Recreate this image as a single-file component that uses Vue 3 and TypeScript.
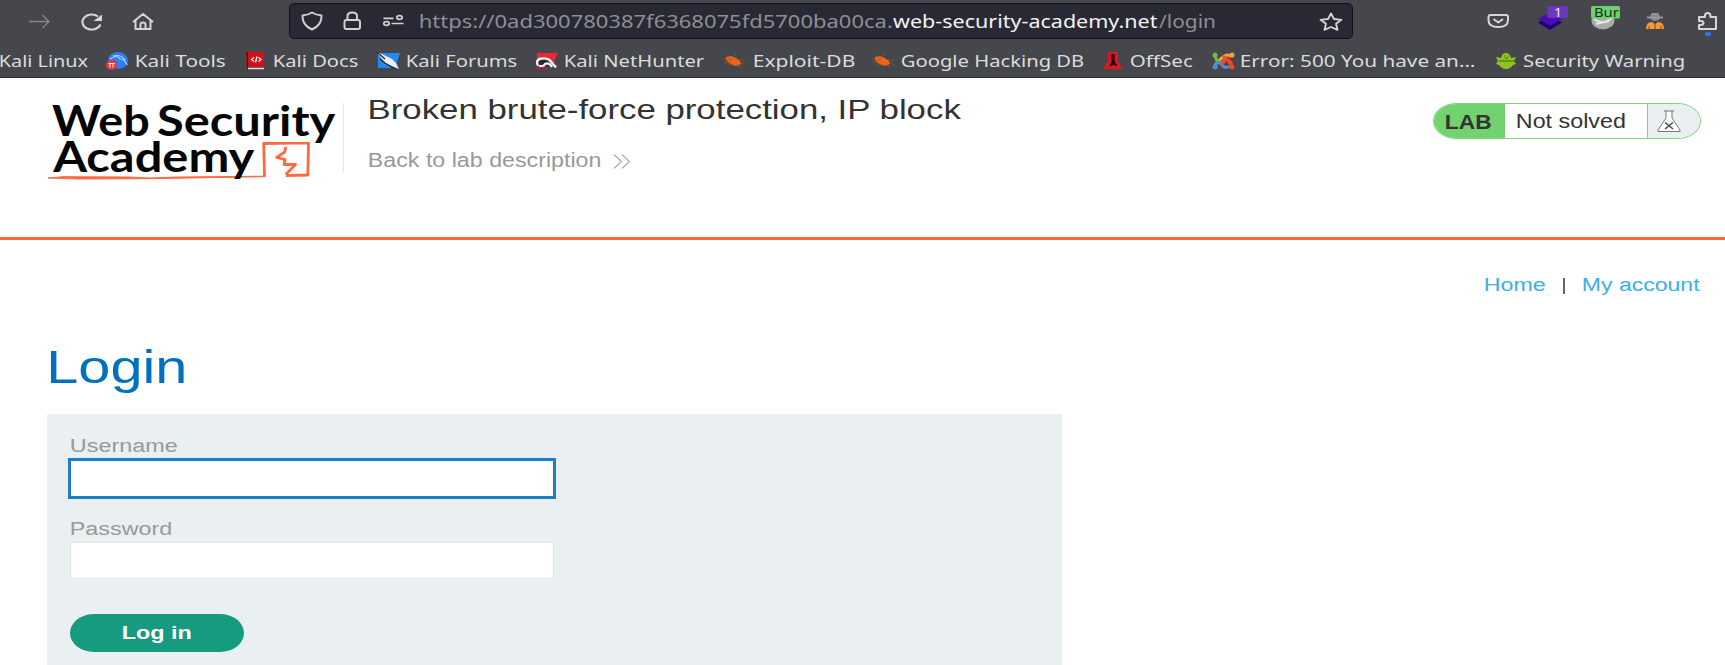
<script setup lang="ts">
import { h, type FunctionalComponent } from 'vue'

interface LabelProps { t: string; w: number; size: number; weight?: number; font?: string }
interface Bookmark { icon: string; label: string; gap: number; width: number; before: number }

const ctx = document.createElement('canvas').getContext('2d')!

/* A single line of text whose visible ink spans exactly `w` pixels. */
const Label: FunctionalComponent<LabelProps> = (p) => {
  const family = p.font ?? '"Liberation Sans", Arial, sans-serif'
  const weight = p.weight ?? 400
  ctx.font = `${weight} ${p.size}px ${family}`
  const m = ctx.measureText(p.t)
  const left = -m.actualBoundingBoxLeft
  const scale = p.w / (m.actualBoundingBoxRight + m.actualBoundingBoxLeft)
  return h('svg', { class: 'label', width: p.w, height: 24 }, [
    h('text', {
      x: left * -1, y: 18, transform: `scale(${scale} 1)`,
      'font-family': family, 'font-size': p.size, 'font-weight': weight, fill: 'currentColor',
    }, p.t),
  ])
}
Label.props = ['t', 'w', 'size', 'weight', 'font']

const ui = '"Noto Sans", sans-serif'
const brand = 'Lato, sans-serif'

const bookmarks: Bookmark[] = [
  { icon: 'tools', before: 17.5, gap: 8, label: 'Kali Tools', width: 90 },
  { icon: 'docs', before: 20, gap: 8, label: 'Kali Docs', width: 84.5 },
  { icon: 'forums', before: 18.5, gap: 7, label: 'Kali Forums', width: 110.5 },
  { icon: 'hunter', before: 17.5, gap: 7.5, label: 'Kali NetHunter', width: 139.5 },
  { icon: 'bug', before: 18, gap: 8.5, label: 'Exploit-DB', width: 100.5 },
  { icon: 'bug', before: 17.5, gap: 7.5, label: 'Google Hacking DB', width: 181.5 },
  { icon: 'offsec', before: 19.5, gap: 8, label: 'OffSec', width: 62 },
  { icon: 'joomla', before: 19, gap: 6.5, label: 'Error: 500 You have an…', width: 233 },
  { icon: 'warn', before: 21.5, gap: 6.5, label: 'Security Warning', width: 161 },
]
</script>

<template>
  <div class="page">
    <header class="chrome">
      <div class="toolbar">
        <svg class="nav-icons" width="289" height="40" fill="none" stroke="#d6d6d6" stroke-width="2">
          <path d="M29 21.5H49M42.500 15l6.500 6.500-6.500 6.500" stroke="#85868a" stroke-width="1.300" />
          <path d="M98 16.500A9.300 7.500 0 1 0 100.500 24.500" />
          <path d="M102 14.500v6.500h-8.500z" fill="#d6d6d6" stroke="none" />
          <path d="M133 22l10-8 10 8M135.500 20.500v8.500h15v-8.500M140.500 29v-4.500q0-2 2.500-2t2.500 2v4.500" stroke-linejoin="round" />
        </svg>
        <div class="urlbar">
          <svg class="url-icons" width="130" height="34" fill="none" stroke="#d0d0d3" stroke-width="2">
            <path d="M22 8.500Q18 11 12.500 11.500 12 21 22 25.500 32 21 31.500 11.500 26 11 22 8.500Z" stroke-linejoin="round" />
            <rect x="54.500" y="16" width="15.500" height="9" rx="2" />
            <path d="M57.500 16v-4q0-3.500 4.750-3.500t4.750 3.500v4" />
            <g stroke-width="1.700">
              <ellipse cx="96.500" cy="19.500" rx="2.700" ry="1.900" /><ellipse cx="109.500" cy="13.500" rx="2.700" ry="1.900" />
              <path d="M93.500 14.300h10M101.500 19.500h12" />
            </g>
          </svg>
          <div class="address">
            <Label class="dim" t="https://0ad300780387f6368075fd5700ba00ca." :w="472" :size="17.6" :font="ui" />
            <Label class="host" t="web-security-academy.net" :w="264" :size="17.6" :font="ui" />
            <Label class="dim" t="/login" :w="56" :size="17.6" :font="ui" />
          </div>
          <svg class="star" width="24" height="20" fill="none" stroke="#d6d6d6" stroke-width="1.800">
            <path d="M12 1.500l3 5.500 7.500.8-5.500 4 1.500 6L12 15l-6.500 2.800 1.500-6-5.500-4L9 7z" stroke-linejoin="round" />
          </svg>
        </div>
        <svg class="extensions" width="372" height="40">
          <g fill="none" stroke="#d6d6d6" stroke-width="2">
            <path d="M137.500 15h15.500q2 0 2 2v3q0 7-9.750 7t-9.750-7v-3q0-2 2-2zM140.500 19l4.750 3.500L150 19" stroke-linejoin="round" />
          </g>
          <path d="M185 22.500l12 7.500 12-7.500-12-7z" fill="#220077" />
          <path d="M185 19l12 6.500 12-6.500-12-6z" fill="#4a0bb0" />
          <rect x="194.500" y="6" width="20.500" height="12" rx="1.500" fill="#6b38c6" />
          <text x="201" y="16.500" font-size="12" textLength="8" lengthAdjust="spacingAndGlyphs" fill="#eee">1</text>
          <ellipse cx="250" cy="20.500" rx="11.500" ry="9" fill="#aaa" />
          <path d="M241 19q8 7 18-1M243 24l13-3" fill="none" stroke="#e4e4e4" stroke-width="2" />
          <rect x="238" y="6" width="29" height="12.500" rx="1.500" fill="#6ed06c" />
          <svg x="238" y="6" width="29" height="14"><text x="3" y="10.500" font-size="12" textLength="34" lengthAdjust="spacingAndGlyphs" fill="#173017">Burp</text></svg>
          <ellipse cx="302" cy="17" rx="5" ry="4" fill="#8b8b8b" /><path d="M294 17.500h16M298.500 14h7" stroke="#969696" stroke-width="2" />
          <path d="M293 29q0-7 6-7l3 2.500 3-2.500q6 0 6 7z" fill="#f79a35" /><path d="M302 22v7M296 26v3M308 26v3" stroke="#6b4d30" />
          <path d="M346 17h6v-1.500q0-2.500 2.700-2.500t2.700 2.500V17h5.600v12h-17v-4h1.500q3 0 3-2t-3-2H346z" fill="none" stroke="#d6d6d6" stroke-width="2" stroke-linejoin="round" />
          <ellipse cx="355" cy="34" rx="3.200" ry="2" fill="#2878ff" />
        </svg>
      </div>
      <nav class="bookmarks">
        <Label class="first" t="Kali Linux" :w="88.500" :size="16.4" :font="ui" />
        <a v-for="b in bookmarks" :key="b.label" class="bookmark" :style="{ marginLeft: b.before + 'px', gap: b.gap + 'px' }">
          <svg v-if="b.icon === 'tools'" width="22" height="18"><ellipse cx="12" cy="8.500" rx="10" ry="8.500" fill="#2d7df6" /><path d="M4 7q7-5 10 0 5 0 7 6M7 4q8-2 12 4" fill="none" stroke="#b8d8ff" stroke-width="1.200" /><ellipse cx="5.500" cy="13" rx="5.500" ry="5" fill="#e6363c" /><path d="M2.500 11.500h6M4 11.500v4M7 11.500v4" stroke="#fff" fill="none" /></svg>
          <svg v-else-if="b.icon === 'docs'" width="20" height="18"><path d="M0 0h18v15H1z" fill="#d31115" /><path d="M0 0h2v17h-1z" fill="#6e0b0d" /><path d="M2 16.500h16" stroke="#e6dada" stroke-width="1.500" /><path d="M8 5.500l-2.500 2 2.500 2M12.500 5.500l2.500 2-2.500 2M11 4.500l-1.500 6" fill="none" stroke="#fff" stroke-width="1.300" /></svg>
          <svg v-else-if="b.icon === 'forums'" width="23" height="18"><path d="M1 1h22l-5 15H1z" fill="#2588f5" /><path d="M0 0l7 3 8 4 4 4 3 6-7-3-6-2-4-5z" fill="#eee" /><path d="M0 0l8 7M3 7l5 4 10 6" fill="none" stroke="#222" stroke-width="1.300" /></svg>
          <svg v-else-if="b.icon === 'hunter'" width="23" height="18"><path d="M2 1h21l-5 11-16 4z" fill="#ed282f" /><path d="M0 15q4-9 11-10l7 9z" fill="#2b2730" /><path d="M3 14Q0 7 7 6.500q6-1 9 3l5 6M4 14q5 1 6-2 4-2 7 3" fill="none" stroke="#f5f5f5" stroke-width="2.300" /><path d="M1 16h11" stroke="#c11845" stroke-width="2" /></svg>
          <svg v-else-if="b.icon === 'bug'" width="22.500" height="18"><path d="M3 5l5-1 5 2 4 3 1 3-5 2-6-2-4-4z" fill="#ee6515" /><path d="M0 7l8 1M4 3l6 5M12 4l1-2M16 8l6 0M17 10l5 3M13 12l5 3M4 14l5-4M1 11l6-1" stroke="#ad5629" stroke-width=".700" /></svg>
          <svg v-else-if="b.icon === 'offsec'" width="20" height="18"><path d="M5 0h10v9l5 8H0l5-8z" fill="#dc1720" /><path d="M8.500 2h3v7l3 5-4-1-4 1 2-4z" fill="#200507" /></svg>
          <svg v-else-if="b.icon === 'joomla'" width="23" height="18" fill="none" stroke-width="3" stroke-linecap="round"><path d="M3 14l0-.5q3-5 8-8.500t7-1" stroke="#f9a13c" /><path d="M20 14q-3-5-8-9" stroke="#ef4524" /><path d="M3 3l1 4q2 4 6 4l4-4" stroke="#76b843" /><path d="M3 15q0-3 4-5l5 5q3 1 7-1" stroke="#4c91d1" /><path d="M20 15l-1-5-4-3-5 5" stroke="#ef4524" /><g stroke-width="5"><path d="M3 3v.1" stroke="#76b843" /><path d="M20 3v.1" stroke="#f9a13c" /><path d="M3 15v.1" stroke="#4c91d1" /><path d="M20 15v.1" stroke="#ef4524" /></g></svg>
          <svg v-else width="20.500" height="18"><path d="M0 5l5 1q1-5 5-5t5 5l5-1-2 4 2 3-3 1q-3 4-7 4t-7-4l-3-1 2-3z" fill="#8fc31d" /><path d="M3 9h15" stroke="#547b13" stroke-width="1.300" fill="none" /><path d="M8 4h1M12 4h1M9 6h3" stroke="#40600d" /></svg>
          <Label :t="b.label" :w="b.width" :size="16.4" :font="ui" />
        </a>
      </nav>
    </header>

    <section class="lab-header">
      <div class="logo">
        <div class="logo-row top">
          <Label t="Web" :w="96.500" :size="42.500" :weight="700" :font="brand" />
          <Label t="Security" :w="179" :size="42.500" :weight="700" :font="brand" />
        </div>
        <svg class="logo-mark" width="266" height="42" fill="none" stroke="#fb6b3d" stroke-linejoin="round">
          <path d="M0 36L15 34.700 80 35 102 36 130 35 217 34.200V34.700L102 36.700 30 37z" fill="#fb6b3d" stroke-width="1" />
          <path d="M216.500 34.500L215.700 1.500 260.500.8 259.800 33 238 33.500" stroke-width="2.800" />
          <path d="M237.700 5L236.700 10 228.700 15.500 237 17.500 236 22.500 247.500 22.500 237.700 32.500" stroke-width="2.800" />
        </svg>
        <div class="logo-row bottom"><Label t="Academy" :w="203" :size="42.500" :weight="700" :font="brand" /></div>
      </div>
      <div class="lab-info">
        <Label class="title" t="Broken brute-force protection, IP block" :w="593" :size="28" />
        <a class="back">
          <Label t="Back to lab description" :w="231.500" :size="19.500" />
          <svg width="18" height="15" fill="none" stroke="#aaa" stroke-width="1.200"><path d="M1 .5l7.500 7L1 14.500M9 .5l7.500 7-7.500 7" /></svg>
        </a>
      </div>
      <div class="status">
        <div class="tag"><Label t="LAB" :w="45.500" :size="19.500" :weight="700" /></div>
        <div class="state"><Label t="Not solved" :w="108" :size="19.500" /></div>
        <div class="flask">
          <svg width="24" height="23" fill="#fff" stroke="#777" stroke-width="1"><path d="M7 1h10M9 1v7L1 20v1.500h22V20L15 8V1" /><path d="M8 12.500l8 6.500M16 12.500l-8 6.500" stroke="#444" stroke-width="1.500" /></svg>
        </div>
      </div>
    </section>

    <nav class="account">
      <Label t="Home" :w="60" :size="19" /><span class="bar"></span><Label t="My account" :w="117.500" :size="19" />
    </nav>

    <main>
      <h1><Label t="Login" :w="134.500" :size="45.500" /></h1>
      <form class="login" @submit.prevent>
        <label class="user-label"><Label t="Username" :w="106" :size="19.200" /></label>
        <input class="user" type="text" aria-label="Username">
        <label class="pass-label"><Label t="Password" :w="100.500" :size="19.200" /></label>
        <input class="pass" type="password" aria-label="Password">
        <button><Label t="Log in" :w="68" :size="19.200" :weight="700" /></button>
      </form>
    </main>
  </div>
</template>

<style>
body { background: #fff; }
.label { display: block; flex: none; overflow: visible; }
</style>

<style scoped>
.page { width: 1725px; height: 665px; overflow: hidden; background: #fff; font-family: "Liberation Sans", Arial, sans-serif; box-sizing: border-box; }
.page * { box-sizing: border-box; }
svg { display: block; flex: none; }
.chrome { height: 78px; background: #45474d; border-bottom: 1.500px solid #2c2d31; color: #dcdcdc; font-family: "Noto Sans", sans-serif; }
.toolbar { display: flex; height: 40px; }
.urlbar { display: flex; width: 1065px; height: 36px; margin-top: 3px; background: #282934; border: 1.500px solid #111218; border-radius: 5px; }
.address { display: flex; margin-top: 5.700px; }
.dim { color: #8e8e94; }
.host { color: #f3f3f5; margin: 0 1.500px 0 1px; }
.star { margin: 7.500px 0 0 104px; }
.bookmarks { display: flex; align-items: flex-start; padding-top: 9px; }
.first { margin-left: -0.5px; }
.bookmark { display: flex; align-items: flex-start; }
.bookmark > svg:first-child { margin-top: 3px; }
.lab-header { display: flex; height: 162px; padding-top: 25px; border-bottom: 3px solid #ff6633; }
.logo { width: 344px; height: 69px; border-right: 1.500px solid #e6e6e6; color: #050505; display: grid; align-content: start; }
.logo-row { display: flex; grid-area: 1 / 1; padding-left: 52px; gap: 8.500px; }
.top { padding-top: 14.500px; }
.bottom { padding-top: 50.500px; }
.logo-mark { grid-area: 1 / 1; margin: 39px 0 0 48px; }
.lab-info { padding-left: 25.500px; width: 1089px; color: #333; }
.title { margin-top: -2px; }
.back { display: flex; align-items: center; gap: 12.500px; margin: 24px 0 0 -1px; color: #999; }
.status { display: flex; width: 268px; height: 36px; border: 1.500px solid #7bd877; border-radius: 24px / 18px; overflow: hidden; color: #333; background: #fff; }
.tag { width: 71px; background: #72d36e; padding: 7px 0 0 12px; }
.state { width: 143px; padding: 6px 0 0 11.500px; border-right: 1px solid #7bd877; }
.flask { flex: 1; background: #eaeff2; padding: 5.500px 0 0 9px; }
.account { display: flex; height: 72px; justify-content: flex-end; padding: 33px 24.500px 0 0; color: #3bb0e6; }
.bar { width: 2.500px; height: 16px; margin: 5px 18px 0 17.500px; background: #666; }
h1 { margin: 0; height: 102px; padding: 52.500px 0 0 50px; color: #0071bf; }
.login { display: flex; flex-direction: column; align-items: flex-start; width: 1015px; height: 260px; margin-left: 47px; padding: 20px 0 0 21px; background: #eaeff2; color: #999; }
.user-label, .pass-label { padding-left: 2.500px; height: 24px; }
.user { width: 488px; height: 41px; border: 3px solid #1a7fc6; background: #fff; outline: 0; padding: 0; }
.pass-label { margin-top: 18px; }
.pass { width: 484px; height: 37px; border: 1px solid #e2e4e5; background: #fff; margin: 0.500px 0 0 2px; padding: 0; }
button { display: block; width: 174.500px; height: 38px; border: 0; border-radius: 24px / 19px; margin: 35px 0 0 1.500px; background: #179b80; color: #fff; padding: 0 0 0 53.500px; }
</style>
